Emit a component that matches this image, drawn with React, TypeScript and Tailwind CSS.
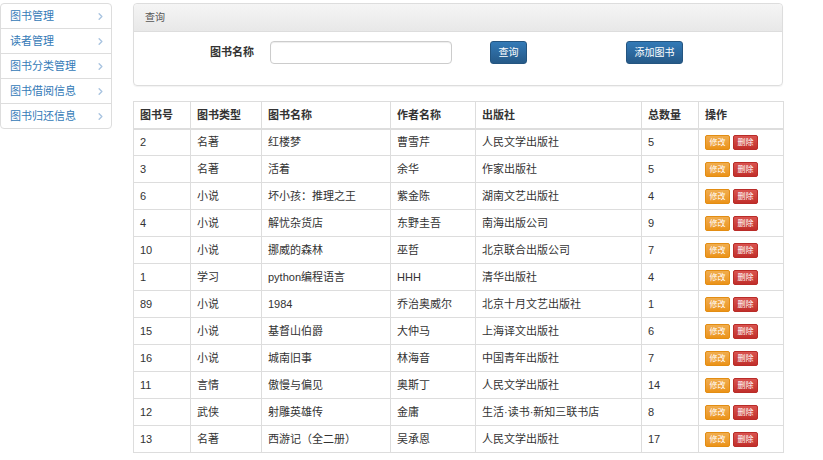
import { ChevronRight } from 'lucide-react'

const menu = ['图书管理', '读者管理', '图书分类管理', '图书借阅信息', '图书归还信息']

const books = [
  ['2', '名著', '红楼梦', '曹雪芹', '人民文学出版社', '5'],
  ['3', '名著', '活着', '余华', '作家出版社', '5'],
  ['6', '小说', '坏小孩：推理之王', '紫金陈', '湖南文艺出版社', '4'],
  ['4', '小说', '解忧杂货店', '东野圭吾', '南海出版公司', '9'],
  ['10', '小说', '挪威的森林', '巫哲', '北京联合出版公司', '7'],
  ['1', '学习', 'python编程语言', 'HHH', '清华出版社', '4'],
  ['89', '小说', '1984', '乔治奥威尔', '北京十月文艺出版社', '1'],
  ['15', '小说', '基督山伯爵', '大仲马', '上海译文出版社', '6'],
  ['16', '小说', '城南旧事', '林海音', '中国青年出版社', '7'],
  ['11', '言情', '傲慢与偏见', '奥斯丁', '人民文学出版社', '14'],
  ['12', '武侠', '射雕英雄传', '金庸', '生活·读书·新知三联书店', '8'],
  ['13', '名著', '西游记（全二册）', '吴承恩', '人民文学出版社', '17'],
]

const cols = ['w-[57px]', 'w-[71px]', 'w-[129px]', 'w-[85px]', 'w-[166px]', 'w-[57px]', 'w-[85px]']
const heads = ['图书号', '图书类型', '图书名称', '作者名称', '出版社', '总数量', '操作']

export default function App() {
  return (
    <div className="w-[823px] h-[460px] bg-white flex items-start gap-[21px] pt-[3px] text-[#333] font-['Liberation_Sans','Noto_Sans_CJK_SC',sans-serif]">
      <ul className="w-[112px] border border-[#ddd] rounded-[4px] bg-white">
        {menu.map((m, i) => (
          <li key={m} className={`flex items-center justify-between pl-[9px] pr-[5px] text-[11px] text-[#337ab7] ${i > 0 ? 'h-[25px] border-t border-[#ddd]' : 'h-[24px]'}`}>
            <span>{m}</span>
            <ChevronRight size={11} strokeWidth={3} className="text-[#a9c4e0]" />
          </li>
        ))}
      </ul>

      <div className="w-[650px] flex flex-col gap-[15px]">
        <div className="border border-[#ddd] rounded-[4px] shadow-[0_1px_1px_rgba(0,0,0,0.05)]">
          <div className="h-[28px] flex items-center px-[11px] text-[10px] text-[#555] bg-gradient-to-b from-[#f5f5f5] to-[#e8e8e8] border-b border-[#ddd] rounded-t-[4px]">查询</div>
          <div className="h-[53px] flex items-start pt-[9px]">
            <label className="ml-[76px] w-[60px] h-[23px] flex items-center text-[11px] font-bold text-[#333]">图书名称</label>
            <input className="w-[182px] h-[23px] border border-[#ccc] rounded-[4px] shadow-[inset_0_1px_1px_rgba(0,0,0,0.075)] outline-none" />
            <button className="ml-[38px] w-[37px] h-[23px] rounded-[3px] border border-[#245580] bg-gradient-to-b from-[#337ab7] to-[#265a88] text-white text-[10px]">查询</button>
            <button className="ml-[99px] w-[57px] h-[23px] rounded-[3px] border border-[#245580] bg-gradient-to-b from-[#337ab7] to-[#265a88] text-white text-[10px]">添加图书</button>
          </div>
        </div>

        <table className="w-[650px] border-collapse border border-[#ddd] text-[11px] table-fixed">
          <thead>
            <tr className="h-[27px]">
              {heads.map((h, i) => (
                <th key={h} className={`${cols[i]} border border-[#ddd] border-b-2 text-left font-bold px-[6px] align-middle`}>{h}</th>
              ))}
            </tr>
          </thead>
          <tbody>
            {books.map(b => (
              <tr key={b[0]} className="h-[27px]">
                {b.map((c, i) => (
                  <td key={i} className="border border-[#ddd] px-[6px] align-middle whitespace-nowrap">{c}</td>
                ))}
                <td className="border border-[#ddd] px-[6px] align-middle">
                  <div className="flex gap-[3px] pt-[1px]">
                    <span className="w-[25px] h-[15px] flex items-center justify-center rounded-[2px] border border-[#e38d13] bg-gradient-to-b from-[#f0ad4e] to-[#eb9316] text-white text-[8px]">修改</span>
                    <span className="w-[25px] h-[15px] flex items-center justify-center rounded-[2px] border border-[#b92c28] bg-gradient-to-b from-[#d9534f] to-[#c12e2a] text-white text-[8px]">删除</span>
                  </div>
                </td>
              </tr>
            ))}
          </tbody>
        </table>
      </div>
    </div>
  )
}
